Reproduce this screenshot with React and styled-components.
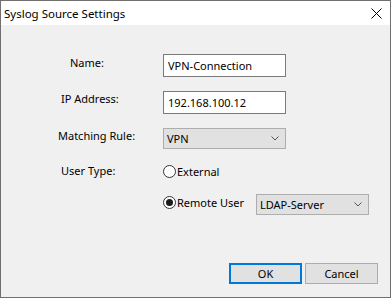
import React from 'react'
import styled, { createGlobalStyle } from 'styled-components'

const GlobalStyle = createGlobalStyle`
  html, body {
    margin: 0;
    padding: 0;
    background: #f0f0f0;
  }
  * {
    box-sizing: border-box;
  }
`

const Window = styled.div`
  width: 391px;
  height: 298px;
  border: 1px solid #707070;
  background: #f0f0f0;
  display: flex;
  flex-direction: column;
  font-family: 'Noto Sans', 'Open Sans', sans-serif;
  font-size: 11px;
  color: #000;
`

const TitleBar = styled.div`
  height: 24px;
  background: #fff;
  display: flex;
  align-items: center;
  justify-content: space-between;
  padding: 0 8px 0 3px;
  font-size: 11.5px;
`

const Body = styled.div`
  flex: 1;
  display: flex;
  flex-direction: column;
  padding-top: 29px;
`

const Row = styled.div`
  display: flex;
  align-items: flex-start;
  height: ${p => p.$h}px;
  margin-top: ${p => p.$gap || 0}px;
`

const LabelCell = styled.div`
  width: 162px;
  padding-left: ${p => p.$indent}px;
  padding-top: ${p => p.$top || 0}px;
  line-height: 16px;
`

const TextBox = styled.input`
  width: 123px;
  height: 23px;
  border: 1px solid #7a7a7a;
  background: #fff;
  padding: 0 4px;
  font: inherit;
  color: #000;
  outline: none;
`

const Combo = styled.div`
  width: ${p => p.$w}px;
  height: 21px;
  border: 1px solid #adadad;
  background: #e1e1e1;
  display: flex;
  align-items: center;
  justify-content: space-between;
  padding: 0 6px 0 3px;
`

const RadioGroup = styled.div`
  display: flex;
  align-items: center;
  height: 16px;
  width: ${p => (p.$w ? `${p.$w}px` : 'auto')};
`

const Circle = styled.span`
  width: 13px;
  height: 13px;
  border-radius: 50%;
  border: 1px solid #333;
  background: #fff;
  display: flex;
  align-items: center;
  justify-content: center;
  margin-right: 1px;
  &::after {
    content: '';
    width: 7px;
    height: 7px;
    border-radius: 50%;
    background: #1a1a1a;
    display: ${p => (p.$checked ? 'block' : 'none')};
  }
`

const Footer = styled.div`
  margin-top: auto;
  display: flex;
  justify-content: flex-end;
  gap: 3px;
  padding: 0 12px 13px 0;
`

const Button = styled.button`
  width: 73px;
  height: 21px;
  font: inherit;
  color: #000;
  background: #e1e1e1;
  border: ${p => (p.$primary ? '2px solid #0078d7' : '1px solid #adadad')};
  padding: 0;
`

function Chevron() {
  return (
    <svg width="8" height="5" viewBox="0 0 8 5">
      <path d="M0.5 0.5 L4 4 L7.5 0.5" fill="none" stroke="#555" strokeWidth="1" />
    </svg>
  )
}

function CloseIcon() {
  return (
    <svg width="11" height="11" viewBox="0 0 11 11">
      <path d="M0.5 0.5 L10.5 10.5 M10.5 0.5 L0.5 10.5" stroke="#000" strokeWidth="1" />
    </svg>
  )
}

export default function App() {
  return (
    <>
      <GlobalStyle />
      <Window>
        <TitleBar>
          <span>Syslog Source Settings</span>
          <CloseIcon />
        </TitleBar>
        <Body>
          <Row $h={23}>
            <LabelCell $indent={69} $top={1}>Name:</LabelCell>
            <TextBox defaultValue="VPN-Connection" readOnly />
          </Row>
          <Row $h={23} $gap={14}>
            <LabelCell $indent={60}>IP Address:</LabelCell>
            <TextBox defaultValue="192.168.100.12" readOnly />
          </Row>
          <Row $h={21} $gap={14}>
            <LabelCell $indent={57}>Matching Rule:</LabelCell>
            <Combo $w={123}>
              <span>VPN</span>
              <Chevron />
            </Combo>
          </Row>
          <Row $h={16} $gap={14}>
            <LabelCell $indent={60}>User Type:</LabelCell>
            <RadioGroup>
              <Circle />
              <span>External</span>
            </RadioGroup>
          </Row>
          <Row $h={21} $gap={15}>
            <LabelCell $indent={0} />
            <RadioGroup $w={93}>
              <Circle $checked />
              <span>Remote User</span>
            </RadioGroup>
            <Combo $w={113}>
              <span>LDAP-Server</span>
              <Chevron />
            </Combo>
          </Row>
        </Body>
        <Footer>
          <Button $primary>OK</Button>
          <Button>Cancel</Button>
        </Footer>
      </Window>
    </>
  )
}
